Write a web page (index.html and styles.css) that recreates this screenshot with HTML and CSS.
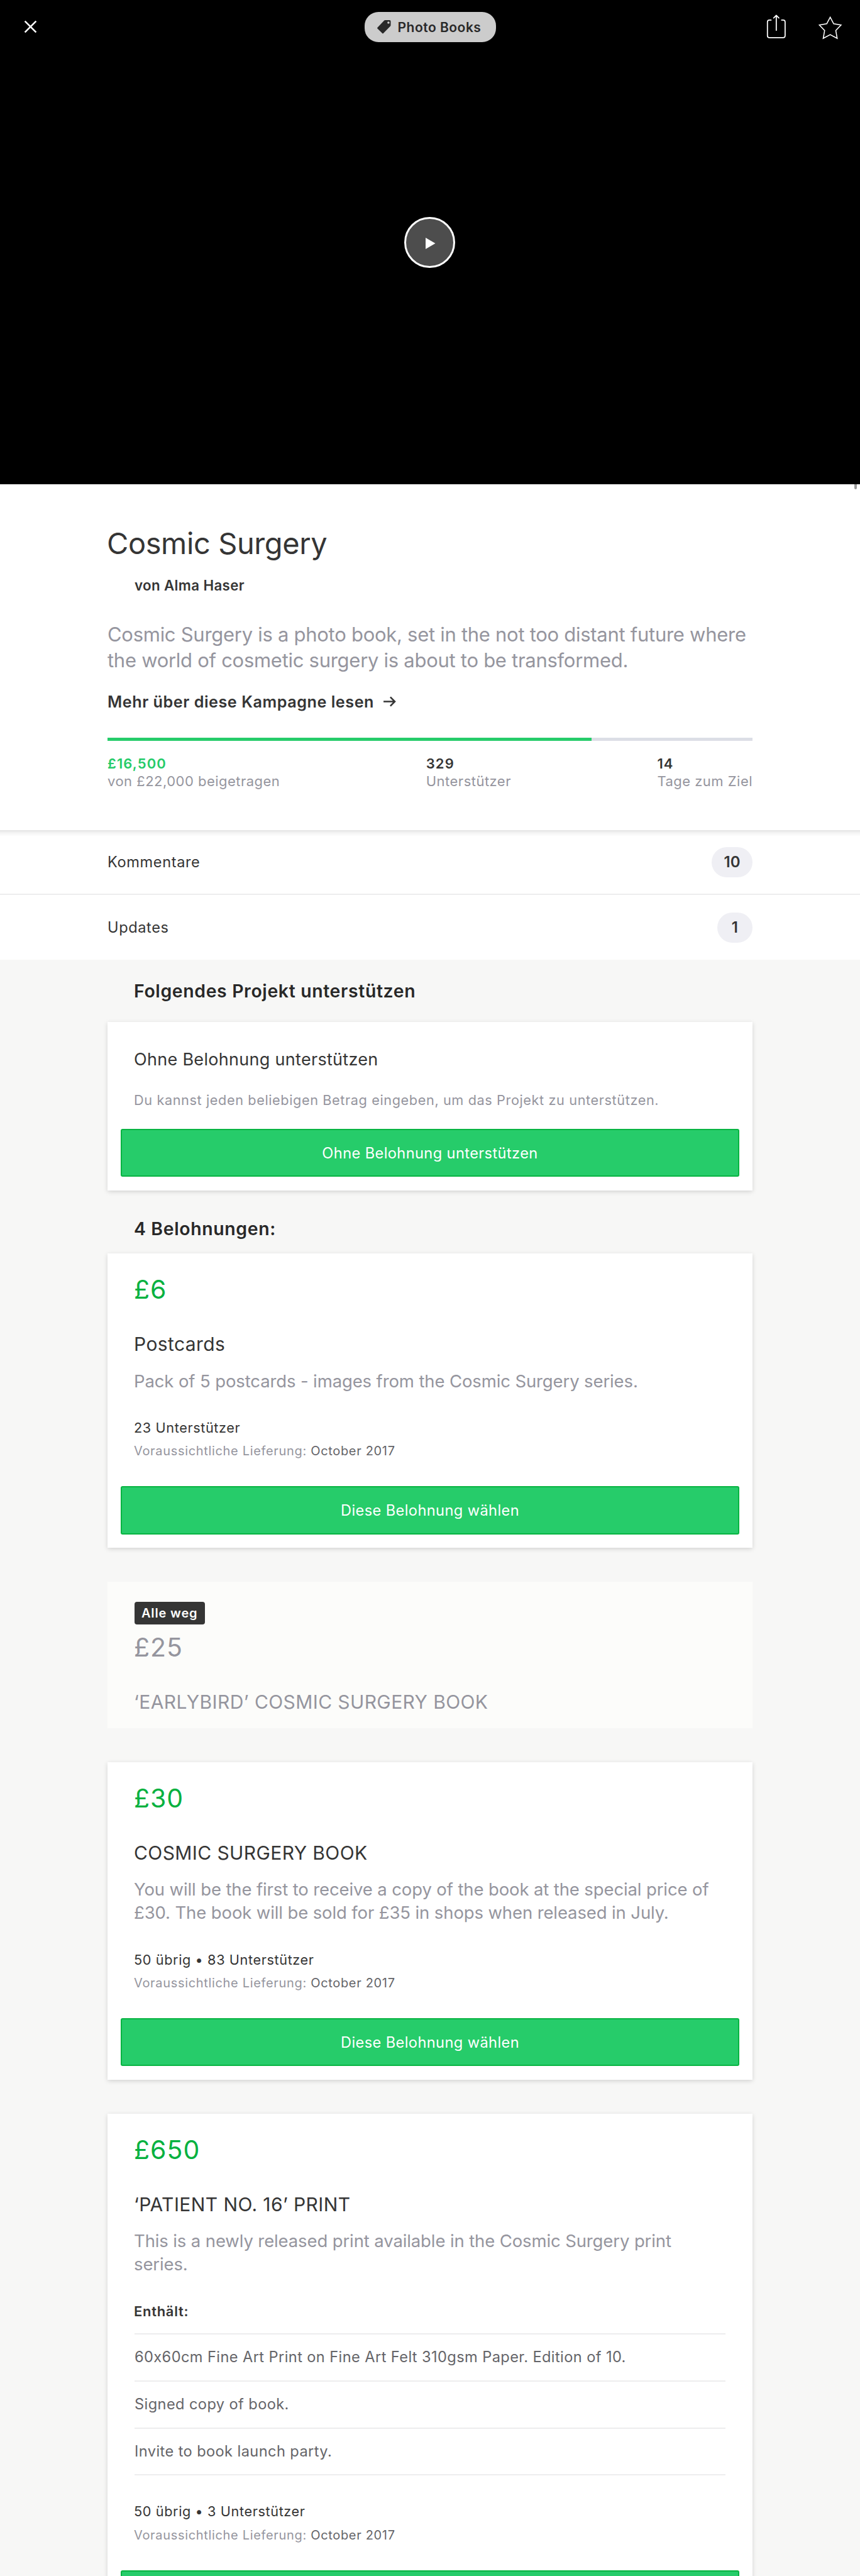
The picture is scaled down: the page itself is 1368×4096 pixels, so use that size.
FILE: index.html
```html
<!DOCTYPE html>
<html lang="de">
<head>
<meta charset="utf-8">
<title>Cosmic Surgery</title>
<link rel="stylesheet" href="styles.css">
</head>
<body>
<div class="page">
  <section class="video">
    <header class="topbar">
      <svg class="icon-close" viewBox="0 0 21 21"><path d="M1.6 1.6L19.4 19.4M19.4 1.6L1.6 19.4"/></svg>
      <a class="category">
        <svg class="icon-tag" viewBox="0 0 36 36"><path fill-rule="evenodd" d="M21 0H33Q36 0 36 3V13.5Q36 15.2 34.8 16.5L16.3 35.2Q15 36.4 13.7 35.2L.8 22.5Q-.5 21 .8 19.5L18.8 1Q19.8 0 21 0ZM30 3.6A3 3 0 1 0 30 9.6A3 3 0 1 0 30 3.6Z"/></svg>
        <span>Photo Books</span>
      </a>
      <div class="actions">
        <svg class="icon-share" viewBox="300 110 170 200"><path d="M343 160H330Q314 160 314 176V285Q314 301 330 301H440Q456 301 456 285V176Q456 160 440 160H428M385 122V242M364 143L385 122L406 143"/></svg>
        <svg class="icon-star" viewBox="715 120 210 200"><path d="M819 137L847 190L906 200L864 244L875 307L819 277L763 307L774 244L732 200L791 190Z"/></svg>
      </div>
    </header>
    <button class="play" aria-label="Video abspielen"><svg viewBox="0 0 26 30"><path d="M0 0L26 15L0 30Z"/></svg></button>
  </section>
  <span class="scroll-thumb"></span>

  <section class="hero">
    <h1>Cosmic Surgery</h1>
    <p class="author">von Alma Haser</p>
    <p class="blurb">Cosmic Surgery is a photo book, set in the not too distant future where<br>the world of cosmetic surgery is about to be transformed.</p>
    <a class="more">Mehr über diese Kampagne lesen
      <svg viewBox="0 0 22 18"><path d="M1 9H20M12.5 1.5L20 9L12.5 16.5"/></svg>
    </a>
    <div class="progress"><div class="progress-fill" style="width:75%"></div></div>
    <dl class="stats">
      <div><dt class="raised">£16,500</dt><dd>von £22,000 beigetragen</dd></div>
      <div><dt>329</dt><dd>Unterstützer</dd></div>
      <div><dt>14</dt><dd>Tage zum Ziel</dd></div>
    </dl>
  </section>

  <nav class="links">
    <a class="link first">Kommentare<span class="count">10</span></a>
    <a class="link">Updates<span class="count">1</span></a>
  </nav>

  <main class="rewards">
    <h2 class="support-heading">Folgendes Projekt unterstützen</h2>
    <article class="card pledge">
      <h3>Ohne Belohnung unterstützen</h3>
      <p class="hint">Du kannst jeden beliebigen Betrag eingeben, um das Projekt zu unterstützen.</p>
      <button class="btn">Ohne Belohnung unterstützen</button>
    </article>

    <h2 class="list-heading">4 Belohnungen:</h2>
    <div class="card-list">
      <article class="card">
        <p class="price">£6</p>
        <h3 class="name">Postcards</h3>
        <p class="desc">Pack of 5 postcards - images from the Cosmic Surgery series.</p>
        <p class="backers">23 Unterstützer</p>
        <p class="delivery">Voraussichtliche Lieferung: <b>October 2017</b></p>
        <button class="btn">Diese Belohnung wählen</button>
      </article>

      <article class="card sold-out">
        <span class="tag">Alle weg</span>
        <p class="price">£25</p>
        <h3 class="name">‘EARLYBIRD’ COSMIC SURGERY BOOK</h3>
      </article>

      <article class="card">
        <p class="price">£30</p>
        <h3 class="name">COSMIC SURGERY BOOK</h3>
        <p class="desc">You will be the first to receive a copy of the book at the special price of<br>£30. The book will be sold for £35 in shops when released in July.</p>
        <p class="backers">50 übrig • 83 Unterstützer</p>
        <p class="delivery">Voraussichtliche Lieferung: <b>October 2017</b></p>
        <button class="btn">Diese Belohnung wählen</button>
      </article>

      <article class="card">
        <p class="price">£650</p>
        <h3 class="name">‘PATIENT NO. 16’ PRINT</h3>
        <p class="desc">This is a newly released print available in the Cosmic Surgery print<br>series.</p>
        <h4>Enthält:</h4>
        <ul class="items">
          <li>60x60cm Fine Art Print on Fine Art Felt 310gsm Paper. Edition of 10.</li>
          <li>Signed copy of book.</li>
          <li>Invite to book launch party.</li>
        </ul>
        <p class="backers">50 übrig • 3 Unterstützer</p>
        <p class="delivery">Voraussichtliche Lieferung: <b>October 2017</b></p>
        <button class="btn" aria-label="Diese Belohnung wählen"></button>
      </article>
    </div>
  </main>
</div>
</body>
</html>
```
FILE: styles.css
```css
* { box-sizing: border-box; }
body, h1, h2, h3, h4, p, dl, dt, dd, ul { margin: 0; padding: 0; }
h1, h2, h3, h4 { font-weight: 400; }

body {
  background: #f7f7f6;
  color: #353535;
  font-family: Inter, "Liberation Sans", sans-serif;
}

.page {
  position: relative;
  width: 1368px;
  height: 4096px;
  overflow: hidden;
}

/* video header */
.video {
  position: relative;
  height: 769.5px;
  background: #000;
}
.topbar {
  display: grid;
  grid-template-columns: 1fr auto 1fr;
  align-items: center;
  height: 86px;
  padding: 0 26.5px 0 38px;
}
.icon-close {
  width: 21px;
  height: 21px;
  margin-bottom: 1px;
  fill: none;
  stroke: #fff;
  stroke-width: 2.6;
}
.category {
  display: flex;
  align-items: center;
  gap: 11px;
  width: 209px;
  height: 48px;
  margin-left: -11.5px;
  padding-left: 20.5px;
  border-radius: 22px;
  background: #ccc;
  color: #282828;
  font-size: 21px;
  font-weight: 600;
  letter-spacing: .5px;
  white-space: nowrap;
}
.icon-tag { width: 21.5px; height: 21.5px; fill: #282828; }
.actions {
  display: flex;
  justify-content: flex-end;
  align-items: flex-start;
  gap: 48.5px;
  fill: none;
  stroke: #fff;
}
.icon-share { width: 33.65px; height: 39.6px; stroke-width: 9; stroke-linecap: round; stroke-linejoin: round; }
.icon-star { width: 41.6px; height: 39.6px; margin-top: 2px; stroke-width: 8; }
.play {
  position: absolute;
  left: 643px;
  top: 344.5px;
  display: flex;
  align-items: center;
  justify-content: center;
  width: 81px;
  height: 81px;
  padding: 3px 0 0 2.5px;
  border: 3.5px solid #fff;
  border-radius: 50%;
  background: #4d4d4d;
}
.play svg { width: 15.5px; height: 18px; fill: #fff; }
.scroll-thumb {
  position: absolute;
  left: 1358.5px;
  top: 769.5px;
  width: 4px;
  height: 8.5px;
  border-radius: 0 0 2px 2px;
  background: #999;
}

/* project summary */
.hero {
  height: 550.5px;
  padding: 66.5px 171px 0;
  background: #fff;
}
h1 {
  margin-left: -1px;
  font-size: 47px;
  line-height: 56px;
  letter-spacing: -.4px;
}
.author {
  margin-top: 24.2px;
  padding-left: 43px;
  font-size: 22.3px;
  font-weight: 600;
  line-height: 30px;
  letter-spacing: .37px;
}
.blurb {
  margin: 42.7px -10px 0 0;
  color: #95959e;
  font-size: 31px;
  line-height: 40.85px;
  letter-spacing: -.28px;
  white-space: nowrap;
}
.more {
  display: flex;
  align-items: center;
  gap: 14px;
  margin-top: 28.7px;
  font-size: 25.2px;
  font-weight: 600;
  line-height: 34px;
  letter-spacing: .54px;
}
.more svg {
  width: 21px;
  height: 17px;
  margin-top: -2px;
  fill: none;
  stroke: #353535;
  stroke-width: 2.7;
}
.progress {
  height: 5px;
  margin-top: 40.1px;
  background: #dcdee6;
}
.progress-fill { height: 100%; background: #26cc6a; }
.stats {
  display: flex;
  justify-content: space-between;
  margin-top: 21.2px;
  font-size: 22px;
  line-height: 28.3px;
  letter-spacing: .48px;
}
.stats dt { font-weight: 600; letter-spacing: 1.1px; }
.stats dd { color: #95959e; }
.stats .raised { color: #25cb68; }

/* link rows */
.links {
  background: #fff linear-gradient(#e3e3e3, #f3f3f3 4px, #fff 10px) no-repeat 0 0 / 100% 10px;
}
.link {
  display: flex;
  align-items: center;
  justify-content: space-between;
  height: 103px;
  padding: 0 171px;
  font-size: 23.6px;
  letter-spacing: .6px;
}
.link.first { border-bottom: 2px solid #ededee; }
.count {
  min-width: 56px;
  padding: 0 19px;
  border-radius: 24px;
  background: #efeff4;
  font-size: 24px;
  font-weight: 600;
  line-height: 48px;
  text-align: center;
  letter-spacing: .3px;
}

/* rewards */
.rewards { padding: 31.2px 171px 0; }
h2 {
  padding-left: 42px;
  color: #282828;
  font-size: 28.4px;
  font-weight: 600;
  line-height: 38px;
  letter-spacing: .65px;
}
.support-heading { margin-bottom: 30.3px; }
.list-heading { margin: 42.6px 0 19.8px; }
.card-list {
  display: flex;
  flex-direction: column;
  gap: 54px;
}
.card {
  padding: 32.1px 42px 21.3px;
  background: #fff;
  box-shadow: 0 2px 7px rgba(0, 0, 0, .15);
  white-space: nowrap;
}
.card.pledge { padding-top: 42px; }
.pledge h3 { font-size: 27px; line-height: 36px; letter-spacing: .3px; }
.hint {
  margin: 30.2px 0 31.2px;
  color: #95959e;
  font-size: 21.7px;
  line-height: 30px;
  letter-spacing: .6px;
}
.btn {
  display: block;
  width: 984px;
  height: 76.5px;
  margin-left: -21px;
  border: 2px solid #08b442;
  border-radius: 3px;
  background: #26cc6a;
  color: #fff;
  font: 400 23.6px Inter, "Liberation Sans", sans-serif;
  letter-spacing: .4px;
}
.price {
  color: #06b13f;
  font-size: 41px;
  line-height: 50px;
  letter-spacing: 1px;
}
.name {
  margin-top: 43.3px;
  font-size: 30px;
  line-height: 38px;
  letter-spacing: .4px;
}
.desc {
  margin-top: 21.2px;
  color: #95959e;
  font-size: 27.5px;
  line-height: 37.1px;
  letter-spacing: -.12px;
}
.backers {
  margin-top: 40.15px;
  font-size: 21.7px;
  line-height: 30px;
  letter-spacing: .6px;
}
.delivery {
  margin: 8.5px 0 41.8px;
  color: #95959e;
  font-size: 20px;
  line-height: 28px;
  letter-spacing: .67px;
}
.delivery b { color: #656569; font-weight: 400; }

.card.sold-out {
  padding-bottom: 22.4px;
  background: #fcfcfa;
  box-shadow: none;
}
.sold-out .price, .sold-out .name { color: #95959e; }
.tag {
  display: block;
  width: 112px;
  height: 36.2px;
  margin: 0 0 10.8px .7px;
  border-radius: 4px;
  background: #353535;
  color: #fff;
  font-size: 20px;
  font-weight: 600;
  line-height: 36.2px;
  letter-spacing: .85px;
  text-align: center;
}

h4 {
  margin: 40.3px 0 20.4px;
  font-size: 22px;
  font-weight: 600;
  line-height: 30px;
  letter-spacing: .7px;
}
.items {
  margin: 0 1px;
  border-bottom: 2px solid #ededee;
  list-style: none;
}
.items li {
  height: 74.75px;
  border-top: 2px solid #ededee;
  color: #656569;
  font-size: 23.6px;
  line-height: 72.75px;
  letter-spacing: .41px;
}
.items + .backers { margin-top: 42px; }
```
